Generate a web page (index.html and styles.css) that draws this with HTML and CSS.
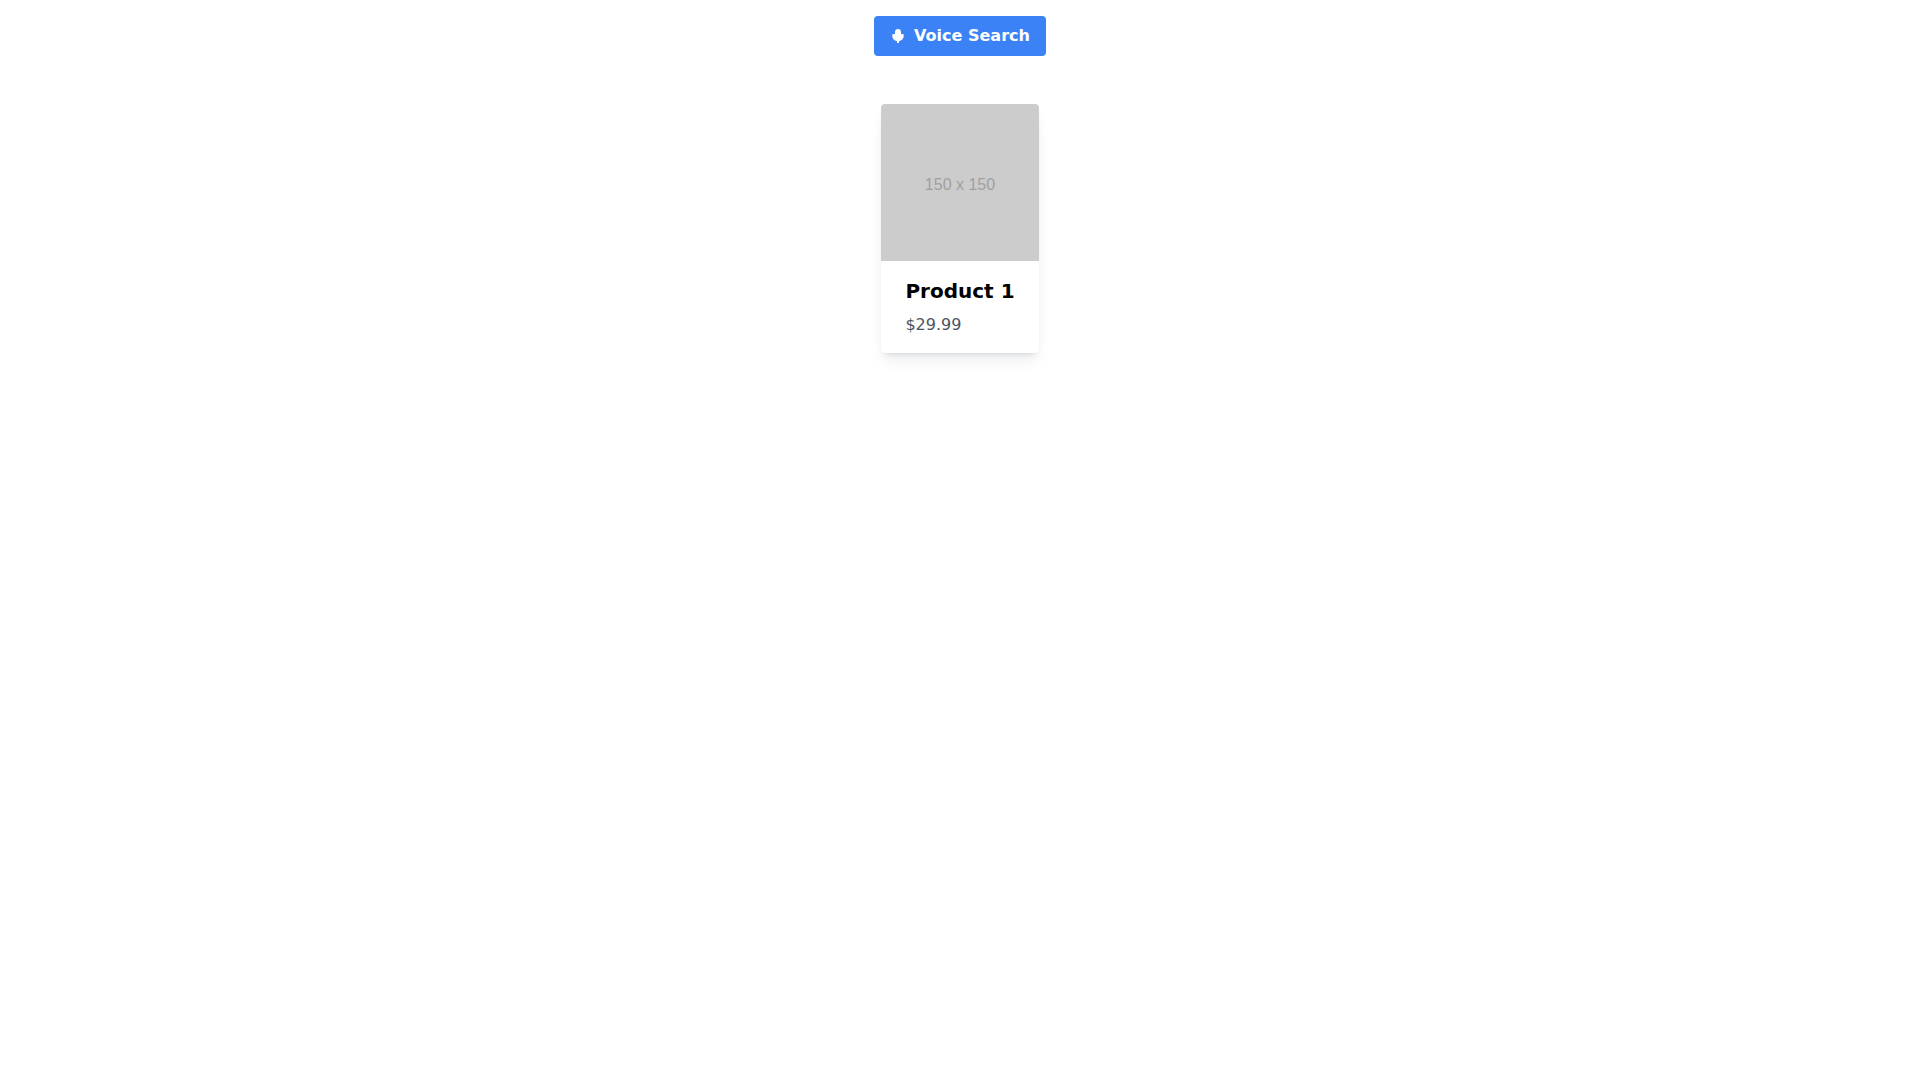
FILE: index.html
```html
<!DOCTYPE html>
<html lang="en">
<head>
    <meta charset="UTF-8">
    <meta name="viewport" content="width=device-width, initial-scale=1.0">
    <title>Voice Search</title>
    <link rel="stylesheet" href="styles.css">
</head>
<body>

<div class="search">
    <button type="button" class="voice-button">
        <svg class="mic" viewBox="0 0 16 16" fill="currentColor" aria-hidden="true">
            <path d="M8 1C6.200 1 5 2.300 5 4V6H3.200C2.700 6 2.300 6.300 2.300 6.800V8C2.300 10.600 4.500 12.800 7 13.200V15H9V13.200C11.500 12.800 13.700 10.600 13.700 8V6.800C13.700 6.300 13.300 6 12.800 6H11V4C11 2.300 9.800 1 8 1Z"/>
        </svg>
        Voice Search
    </button>
</div>

<div class="products">
    <div class="card">
        <div class="card-image">150 x 150</div>
        <div class="card-body">
            <h2 class="card-title">Product 1</h2>
            <p class="card-price">$29.99</p>
        </div>
    </div>
</div>

</body>
</html>
```
FILE: styles.css
```css
* {
    box-sizing: border-box;
}
body {
    margin: 0;
    font-family: "DejaVu Sans", sans-serif;
    font-size: 16px;
    line-height: 24px;
    background: white;
}
.search {
    display: flex;
    justify-content: center;
    padding: 16px;
}
.voice-button {
    display: inline-flex;
    align-items: center;
    gap: 8px;
    padding: 8px 16px;
    border: none;
    border-radius: 4px;
    background-color: #3b82f6;
    color: white;
    font: inherit;
    font-weight: bold;
    cursor: pointer;
}
.voice-button:hover {
    background-color: #1d4ed8;
}
.mic {
    width: 16px;
    height: 16px;
}
.products {
    display: flex;
    flex-wrap: wrap;
    justify-content: center;
    gap: 16px;
    padding: 32px 16px;
}
.card {
    border-radius: 4px;
    overflow: hidden;
    box-shadow: 0 10px 15px -3px rgba(10, 25, 50, 0.08), 0 4px 6px -4px rgba(10, 25, 50, 0.16);
}
.card-image {
    display: flex;
    align-items: center;
    justify-content: center;
    aspect-ratio: 1;
    padding-top: 4px;
    background-color: #ccc;
    color: #a0a0a0;
    font-family: "Liberation Sans", Arial, sans-serif;
}
.card-body {
    padding: 16px 24px;
}
.card-title {
    margin: 0 0 8px;
    font-size: 20px;
    line-height: 28px;
}
.card-price {
    margin: 0;
    color: #4b5563;
}
```
